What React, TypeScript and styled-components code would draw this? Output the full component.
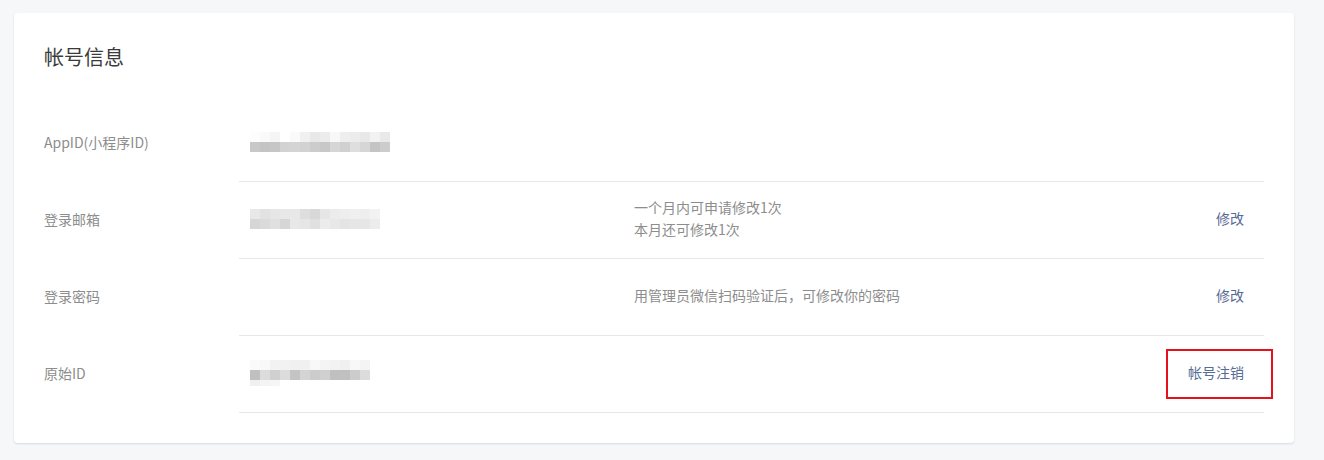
import React from "react";
import styled, { createGlobalStyle } from "styled-components";

const Global = createGlobalStyle`
  html, body { margin: 0; padding: 0; background: #f6f7f9; }
  body { font-family: "Noto Sans CJK SC", "Liberation Sans", sans-serif; }
  * { box-sizing: border-box; }
`;

const Page = styled.div`
  padding: 13px 30px 17px 14px;
  width: 1324px;
`;

const Card = styled.section`
  background: #fff;
  border-radius: 4px;
  box-shadow: 0 1px 2px rgba(140, 145, 155, 0.28);
  padding: 0 30px 30px 30px;
`;

const Header = styled.div`
  height: 92px;
  display: flex;
  align-items: center;
  padding-bottom: 4px;
`;

const Title = styled.h2`
  margin: 0;
  font-size: 20px;
  font-weight: 400;
  line-height: 28px;
  color: #3a3a3a;
`;

const Row = styled.div`
  display: flex;
  align-items: stretch;
`;

const Label = styled.div`
  width: 195px;
  flex: none;
  display: flex;
  align-items: center;
  padding-bottom: 4px;
  font-size: 14px;
  line-height: 20px;
  color: #8d8d8d;
`;

const Body = styled.div`
  flex: 1;
  display: flex;
  align-items: center;
  height: 77px;
  padding-bottom: 2px;
  border-bottom: 1px solid #e7e7eb;
`;

const Value = styled.div`
  width: 395px;
  flex: none;
  padding-left: 11px;
  display: flex;
  align-items: center;
`;

const Tips = styled.div`
  flex: 1;
  font-size: 14px;
  line-height: 22px;
  color: #8d8d8d;
  padding-bottom: 2px;
`;

const Action = styled.a`
  position: relative;
  margin-right: 20px;
  margin-bottom: 2px;
  font-size: 14px;
  line-height: 20px;
  color: #576b95;
  text-decoration: none;
  cursor: pointer;
`;

const Highlight = styled.span`
  position: absolute;
  left: -22px;
  right: -29px;
  top: -13px;
  bottom: -17px;
  border: 2px solid #e5121b;
  pointer-events: none;
`;

type MosaicProps = { rows: { h: number; cells: string[] }[] };

const Mosaic: React.FC<MosaicProps> = ({ rows }) => {
  const width = Math.max(...rows.map((r) => r.cells.length)) * 10;
  const height = rows.reduce((a, r) => a + r.h, 0);
  let y = 0;
  return (
    <svg width={width} height={height} viewBox={`0 0 ${width} ${height}`} style={{ display: "block" }}>
      {rows.map((r, ri) => {
        const top = y;
        y += r.h;
        return r.cells.map((c, ci) => (
          <rect key={`${ri}-${ci}`} x={ci * 10} y={top} width={10} height={r.h} fill={c} />
        ));
      })}
    </svg>
  );
};

const appId = [
  { h: 10, cells: ["#fdfdfd", "#fafafa", "#f5f5f5", "#ffffff", "#fafafa", "#f0f0f0", "#e8e8e8", "#ececec", "#f8f8f8", "#eeeeee", "#ececec", "#e8e8e8", "#f2f2f2", "#e9e9e9"] },
  { h: 10, cells: ["#c8c8c8", "#c4c4c4", "#c6c6c6", "#d2d2d2", "#d4d4d4", "#d2d2d2", "#cccccc", "#c8c8c8", "#d6d6d6", "#d0d0d0", "#dedede", "#d6d6d6", "#c4c4c4", "#cccccc"] },
];

const email = [
  { h: 10, cells: ["#e8e8e8", "#e2e2e2", "#e6e6e6", "#e8e8e8", "#e8e8e8", "#dedede", "#d8d8d8", "#e6e6e6", "#ececec", "#eeeeee", "#f0f0f0", "#eeeeee", "#f2f2f2"] },
  { h: 10, cells: ["#d6d6d6", "#dadada", "#e0e0e0", "#d6d6d6", "#e8e8e8", "#e6e6e6", "#e0e0e0", "#ececec", "#e8e8e8", "#e4e4e4", "#e6e6e6", "#e6e6e6", "#ececec"] },
];

const originId = [
  { h: 10, cells: ["#fafafa", "#f8f8f8", "#f2f2f2", "#f2f2f2", "#f0f0f0", "#f0f0f0", "#f8f8f8", "#f4f4f4", "#f2f2f2", "#f0f0f0", "#f8f8f8", "#f4f4f4"] },
  { h: 10, cells: ["#c0c0c0", "#dcdcdc", "#d0d0d0", "#dcdcdc", "#c4c4c4", "#d4d4d4", "#cccccc", "#d0d0d0", "#c0c0c0", "#c0c0c0", "#cccccc", "#dcdcdc"] },
  { h: 6, cells: ["#f0f0f0", "#f4f4f4", "#f6f6f6", "#ffffff", "#ffffff", "#ffffff", "#ffffff", "#ffffff", "#ffffff", "#ffffff", "#ffffff", "#ffffff"] },
];

export default function App() {
  return (
    <Page>
      <Global />
      <Card>
        <Header>
          <Title>帐号信息</Title>
        </Header>
        <Row>
          <Label>AppID(小程序ID)</Label>
          <Body>
            <Value>
              <Mosaic rows={appId} />
            </Value>
            <Tips />
          </Body>
        </Row>
        <Row>
          <Label>登录邮箱</Label>
          <Body>
            <Value>
              <Mosaic rows={email} />
            </Value>
            <Tips>
              <div>一个月内可申请修改1次</div>
              <div>本月还可修改1次</div>
            </Tips>
            <Action>修改</Action>
          </Body>
        </Row>
        <Row>
          <Label>登录密码</Label>
          <Body>
            <Value />
            <Tips>用管理员微信扫码验证后，可修改你的密码</Tips>
            <Action>修改</Action>
          </Body>
        </Row>
        <Row>
          <Label>原始ID</Label>
          <Body>
            <Value>
              <Mosaic rows={originId} />
            </Value>
            <Tips />
            <Action>
              帐号注销
              <Highlight />
            </Action>
          </Body>
        </Row>
      </Card>
    </Page>
  );
}
